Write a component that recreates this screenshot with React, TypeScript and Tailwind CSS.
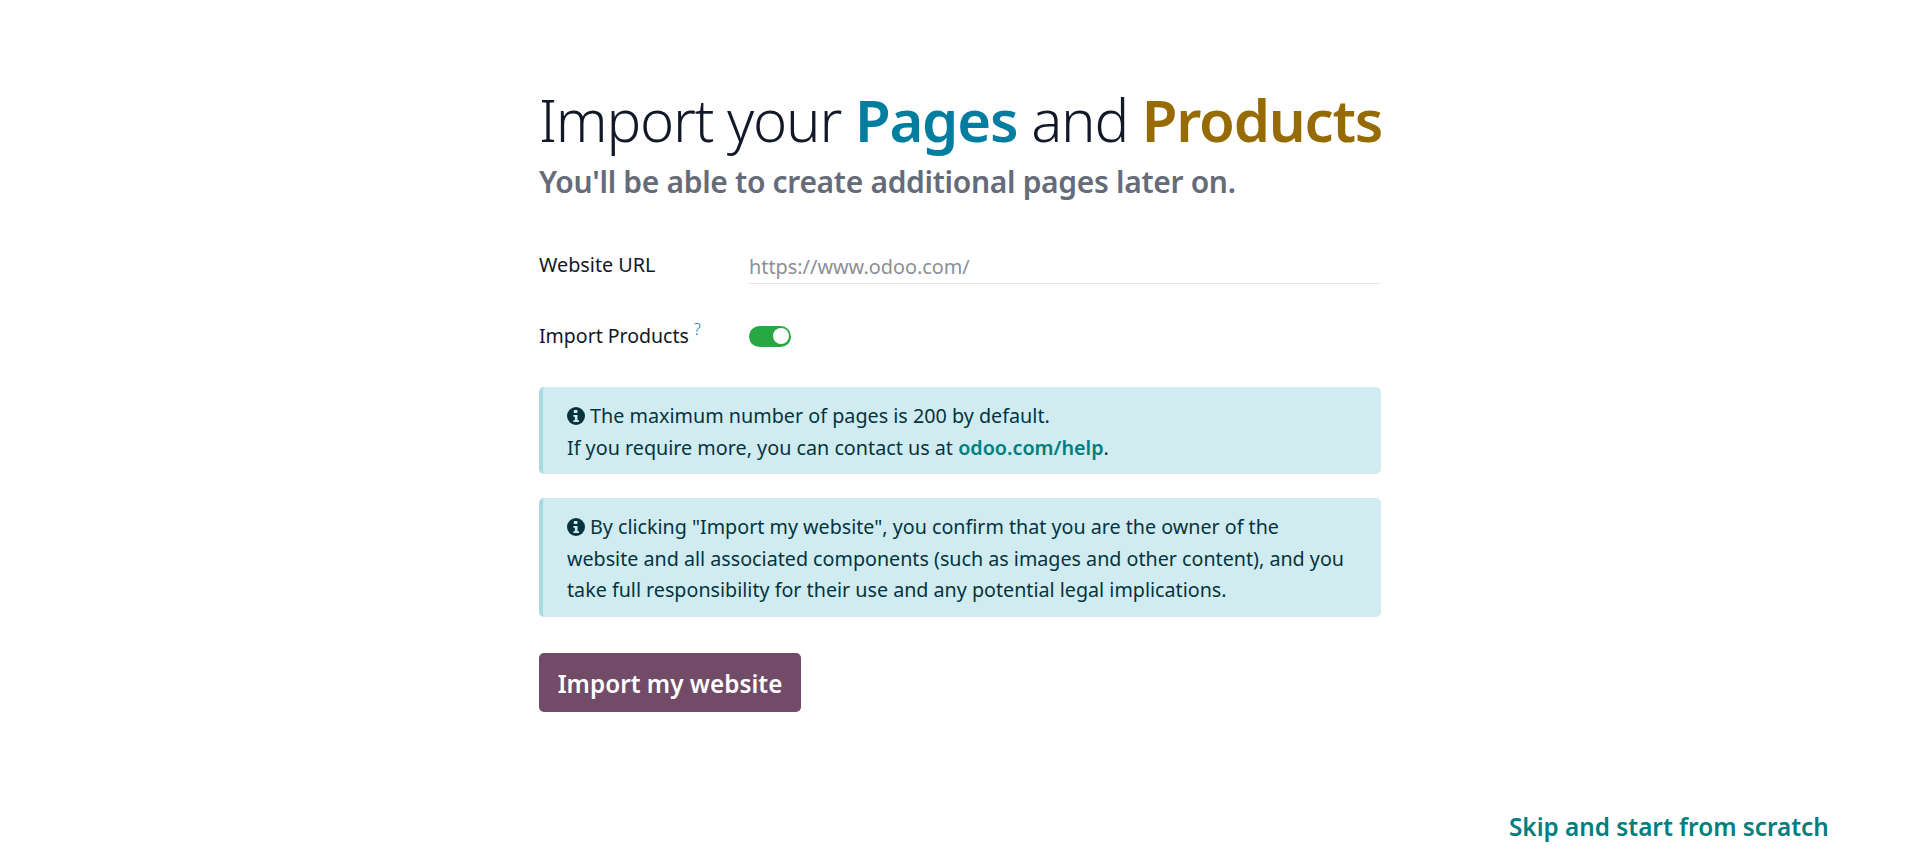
function InfoIcon() {
  return (
    <svg viewBox="0 0 24 24" className="inline-block w-[18px] h-[18px] align-[-2px] mr-[5px]">
      <circle cx="12" cy="12" r="12" fill="#05343f" />
      <rect x="9" y="4" width="5" height="4" rx="1" fill="#d0ecf1" />
      <path d="M8.5 10.5h5.5v7h2v2.5H8.5v-2.5h2v-4.5h-2z" fill="#d0ecf1" />
    </svg>
  );
}

export default function App() {
  return (
    <div className="relative min-h-[867px] bg-white text-[#111827] font-['Noto_Sans',sans-serif]">
      <div className="w-[842px] ml-[539px] pt-[84px]">
        <h1 className="text-[58px] leading-[72px] font-light tracking-[-1.21px] whitespace-nowrap">
          Import your <b className="font-semibold text-[#017e9f]">Pages</b> and{' '}
          <b className="font-semibold text-[#966b03]">Products</b>
        </h1>
        <h2 className="mt-[6px] text-[30px] leading-[40px] font-semibold text-[#656b78] tracking-[-0.32px] whitespace-nowrap">
          You'll be able to create additional pages later on.
        </h2>

        <div className="mt-[42px] flex items-start">
          <label className="w-[210px] text-[19.8px] leading-[30px] pt-[6px]">Website URL</label>
          <div className="flex-1 h-[40px] border-b border-[#e5e7eb] text-[19.85px] leading-[32px] pt-[7px] text-[#8b8f98]">
            https://www.odoo.com/
          </div>
        </div>

        <div className="mt-[37px] flex items-center h-[30px]">
          <label className="w-[210px] text-[19.5px] leading-[32px]">
            Import Products <sup className="text-[16px] font-light text-[#017e9f]">?</sup>
          </label>
          <div className="relative w-[42px] h-[21px] rounded-full bg-[#28a745]">
            <div className="absolute right-[2px] top-[2.5px] w-[16px] h-[16px] rounded-full bg-white" />
          </div>
        </div>

        <div className="mt-[36px] h-[87px] rounded-[5px] border-l-4 border-[#a7dae2] bg-[#d0ecf1] pl-[24px] pt-[13px] text-[19.75px] leading-[32px] text-[#05343f]">
          <div><InfoIcon />The maximum number of pages is 200 by default.</div>
          <div>
            If you require more, you can contact us at{' '}
            <a className="font-semibold text-[#017e7e]">odoo.com/help</a>.
          </div>
        </div>

        <div className="mt-[24px] h-[119px] rounded-[5px] border-l-4 border-[#a7dae2] bg-[#d0ecf1] pl-[24px] pt-[13px] text-[19.7px] leading-[31.5px] text-[#05343f] whitespace-nowrap">
          <InfoIcon />By clicking "Import my website", you confirm that you are the owner of the
          <br />
          website and all associated components (such as images and other content), and you
          <br />
          take full responsibility for their use and any potential legal implications.
        </div>

        <button className="mt-[36px] w-[262px] h-[59px] rounded-[5px] bg-[#714b67] text-white text-[24.3px] leading-[36px] pt-[3px] font-semibold">
          Import my website
        </button>
      </div>

      <a className="absolute left-[1509px] top-[808px] text-[24.3px] leading-[38px] font-semibold text-[#017e7e] whitespace-nowrap">
        Skip and start from scratch
      </a>
    </div>
  );
}
